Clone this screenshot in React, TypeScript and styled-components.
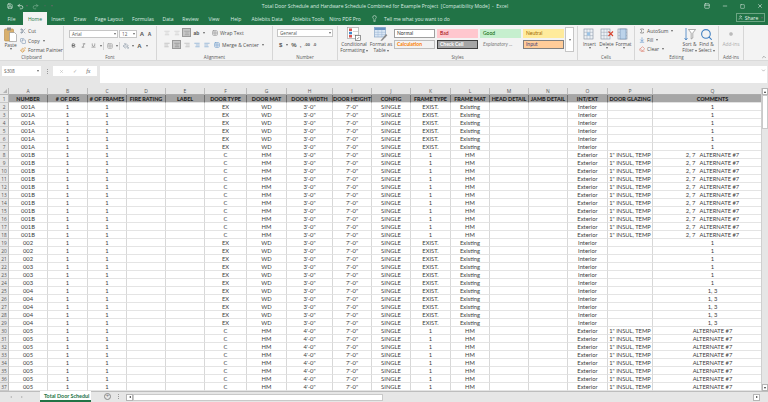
import React from "react";
import styled, { createGlobalStyle } from "styled-components";
import {
  AlignCenter, AlignLeft, AlignRight, Bold, ChevronDown, ChevronUp, Circle, Copy, Italic, Lightbulb,
  Minus, Paintbrush, PaintBucket, Redo2, Save, Scissors, Search, Sigma, Square,
  Underline, Undo2, User, X, Eraser, ArrowDownToLine, Grid2x2, PanelTop,
} from "lucide-react";

const GREEN = "#217346";

const Global = createGlobalStyle`
  html, body { margin: 0; padding: 0; background: #e6e6e6; overflow: hidden; }
  #root { width: 768px; height: 402px; }
  * { box-sizing: border-box; }
`;

const Page = styled.div`
  width: 768px;
  height: 402px;
  display: flex;
  flex-direction: column;
  overflow: hidden;
  font-family: "Open Sans", "Liberation Sans", sans-serif;
  font-size: 5px;
  color: #444;
`;

/* title bar */
const TitleBar = styled.div`
  height: 12px;
  background: ${GREEN};
  color: #e8f3ec;
  display: grid;
  grid-template-columns: 1fr auto 1fr;
  align-items: center;
  padding: 0 5px 0 7px;
`;
const Qat = styled.div`
  display: flex;
  align-items: center;
  gap: 4px;
  color: #fff;
`;
const WinControls = styled.div`
  display: flex;
  justify-content: flex-end;
  align-items: center;
  gap: 12px;
  color: #fff;
`;
const Faded = styled.span`
  display: flex;
  opacity: 0.45;
`;
const Title = styled.div`
  white-space: pre;
  font-size: 5px;
  color: #dcebe2;
`;

/* tab row */
const TabRow = styled.div`
  height: 13px;
  background: ${GREEN};
  display: flex;
  align-items: stretch;
  color: #dcebe2;
`;
const Tab = styled.div<{ $w: number; $active?: boolean }>`
  width: ${(p) => p.$w}px;
  flex: none;
  display: flex;
  align-items: center;
  justify-content: center;
  white-space: nowrap;
  font-size: 5px;
  background: ${(p) => (p.$active ? "#f3f3f3" : "transparent")};
  color: ${(p) => (p.$active ? GREEN : "inherit")};
`;
const TellMe = styled.div`
  display: flex;
  align-items: center;
  gap: 6px;
  margin-left: 11px;
  font-size: 5px;
`;
const ShareBtn = styled.div`
  margin: 1px 3px 3px auto;
  width: 29px;
  border: 1px solid #6ca583;
  display: flex;
  align-items: center;
  justify-content: center;
  gap: 2px;
  color: #e8f3ec;
  font-size: 5px;
`;

/* ribbon */
const Ribbon = styled.div`
  height: 36px;
  background: #f3f3f3;
  display: flex;
  border-bottom: 1px solid #dadada;
  flex: none;
`;
const Group = styled.div<{ $w: number }>`
  width: ${(p) => p.$w}px;
  flex: none;
  display: flex;
  flex-direction: column;
  border-right: 1px solid #d6d6d6;
  margin-top: 1px;
`;
const GroupBody = styled.div<{ $pad?: string; $gap?: number }>`
  flex: 1;
  display: flex;
  min-height: 0;
  padding: ${(p) => p.$pad ?? "0"};
  gap: ${(p) => p.$gap ?? 0}px;
`;
const GroupLabel = styled.div`
  height: 6px;
  line-height: 6px;
  text-align: center;
  font-size: 4.5px;
  color: #5a5a5a;
`;
const Stack = styled.div<{ $gap?: number; $w?: number; $pt?: number }>`
  display: flex;
  flex-direction: column;
  gap: ${(p) => p.$gap ?? 0}px;
  width: ${(p) => (p.$w ? `${p.$w}px` : "auto")};
  padding-top: ${(p) => p.$pt ?? 0}px;
`;
const Line = styled.div<{ $gap?: number; $ml?: number }>`
  display: flex;
  align-items: center;
  gap: ${(p) => p.$gap ?? 2}px;
  margin-left: ${(p) => p.$ml ?? 0}px;
  white-space: nowrap;
  color: #505050;
  height: 9px;
  font-size: 5px;
`;
const BigButton = styled.div<{ $w: number; $muted?: boolean }>`
  width: ${(p) => p.$w}px;
  flex: none;
  display: flex;
  flex-direction: column;
  align-items: center;
  padding-top: 1px;
  font-size: 4.8px;
  line-height: 6px;
  color: ${(p) => (p.$muted ? "#aaa" : "#505050")};
  white-space: nowrap;
`;
const BigIcon = styled.div`
  height: 14px;
  display: flex;
  align-items: center;
  justify-content: center;
`;
const Caret = styled.span`
  display: inline-block;
  flex: none;
  width: 0;
  height: 0;
  margin-left: 1px;
  border-left: 1.5px solid transparent;
  border-right: 1.5px solid transparent;
  border-top: 2px solid #666;
  vertical-align: middle;
`;
const Select = styled.div<{ $w: number }>`
  width: ${(p) => p.$w}px;
  height: 8px;
  background: #fff;
  border: 1px solid #c6c6c6;
  display: flex;
  align-items: center;
  justify-content: space-between;
  padding: 0 1px 0 2px;
  font-size: 4.6px;
  color: #555;
`;
const Toggle = styled.span<{ $on?: boolean }>`
  width: 9px;
  height: 9px;
  flex: none;
  display: flex;
  align-items: center;
  justify-content: center;
  background: ${(p) => (p.$on ? "#c6c6c6" : "transparent")};
  border: 1px solid ${(p) => (p.$on ? "#9a9a9a" : "transparent")};
`;
const Divider = styled.span`
  width: 1px;
  height: 8px;
  background: #d0d0d0;
  flex: none;
`;
const GlyphText = styled.span<{ $size?: number }>`
  font-size: ${(p) => p.$size ?? 6}px;
  font-weight: 600;
  color: #555;
  font-family: "Liberation Sans", sans-serif;
`;
const Gallery = styled.div`
  display: grid;
  grid-template-columns: repeat(4, 41px);
  grid-auto-rows: 9px;
  gap: 2px;
  align-content: start;
  padding-top: 3px;
  margin-left: 2px;
`;
const StyleChip = styled.div<{ $bg: string; $fg: string; $border?: string; $italic?: boolean; $bold?: boolean }>`
  background: ${(p) => p.$bg};
  color: ${(p) => p.$fg};
  border: 1px solid ${(p) => p.$border ?? p.$bg};
  font-style: ${(p) => (p.$italic ? "italic" : "normal")};
  font-weight: ${(p) => (p.$bold ? 700 : 400)};
  font-size: 5px;
  line-height: 7px;
  padding-left: 2px;
  overflow: hidden;
  white-space: nowrap;
  font-family: Lato, "Liberation Sans", sans-serif;
`;
const GalleryScroll = styled.div`
  width: 9px;
  height: 25px;
  margin: 1px 0 0 1px;
  background: #fff;
  border: 1px solid #c6c6c6;
  display: flex;
  align-items: center;
  justify-content: center;
`;
const Collapse = styled.div`
  position: absolute;
  right: 1px;
  bottom: 1px;
  display: flex;
  color: #666;
`;
const RibbonWrap = styled.div`
  position: relative;
  flex: none;
`;

/* formula bar */
const FormulaBar = styled.div`
  height: 27px;
  flex: none;
  background: #e6e6e6;
  display: flex;
  align-items: flex-start;
  padding: 5px 1px 5px 2px;
`;
const NameBox = styled.div`
  width: 39px;
  height: 10px;
  background: #fff;
  display: flex;
  align-items: center;
  justify-content: space-between;
  padding: 0 2px 0 2px;
  font-size: 4.8px;
  color: #555;
`;
const BarDots = styled.span`
  width: 1px;
  height: 5px;
  margin: 3px 5px 0 6px;
  border-left: 1px dotted #999;
  flex: none;
`;
const FxBox = styled.div`
  width: 44px;
  height: 10px;
  background: #fff;
  display: flex;
  align-items: center;
  justify-content: space-around;
  color: #aaa;
  padding: 0 2px;
`;
const FxText = styled.span`
  font-family: "Liberation Serif", serif;
  font-style: italic;
  font-size: 6px;
  color: #666;
`;
const FormulaInput = styled.div`
  flex: 1;
  height: 17px;
  margin-left: 3px;
  background: #fff;
  display: flex;
  justify-content: flex-end;
  padding: 2px 1px;
  color: #666;
`;

/* sheet */
const SheetArea = styled.div`
  height: 303px;
  flex: none;
  display: flex;
  background: #fff;
`;
// Q runs on past the window edge, under the scroll bar
const COLS = [39, 40, 39, 39, 39, 42, 40, 46, 39, 39, 40, 39, 39, 39, 40, 45, 120];
const Grid = styled.div`
  width: 761px;
  overflow: hidden;
  display: grid;
  grid-template-columns: 9px ${COLS.map((c) => `${c}px`).join(" ")};
  grid-template-rows: 7px repeat(37, 8px);
  font-family: Lato, "Liberation Sans", sans-serif;
`;
const Corner = styled.div`
  background: #e6e6e6;
  border-right: 1px solid #b8b8b8;
  border-bottom: 1px solid #b8b8b8;
  position: relative;
  &::after {
    content: "";
    position: absolute;
    right: 1px;
    bottom: 1px;
    border-left: 4px solid transparent;
    border-bottom: 4px solid #b4b4b4;
  }
`;
const ColHead = styled.div`
  background: #e6e6e6;
  border-right: 1px solid #bcbcbc;
  border-bottom: 1px solid #ababab;
  display: flex;
  align-items: center;
  justify-content: center;
  font-size: 5px;
  color: #555;
  font-family: "Open Sans", sans-serif;
`;
const RowHead = styled.div`
  background: #e6e6e6;
  border-right: 1px solid #b8b8b8;
  border-bottom: 1px solid #c8c8c8;
  display: flex;
  align-items: center;
  justify-content: center;
  font-size: 4.8px;
  color: #555;
  font-family: "Open Sans", sans-serif;
`;
const HeadCell = styled.div`
  background: #a6a6a6;
  border-right: 1px solid #6f6f6f;
  border-bottom: 1px solid #e2e2e2;
  display: flex;
  align-items: center;
  justify-content: center;
  font-size: 5.4px;
  font-weight: 900;
  color: #242424;
  white-space: nowrap;
`;
const Cell = styled.div`
  border-right: 1px solid #d8d8d8;
  border-bottom: 1px solid #e4e4e4;
  display: flex;
  align-items: center;
  justify-content: center;
  font-size: 5.8px;
  color: #3c3c3c;
  white-space: pre;
`;
const VScroll = styled.div`
  width: 7px;
  background: #e6e6e6;
  display: flex;
  flex-direction: column;
  border-left: 1px solid #cfcfcf;
`;
const ScrollBtn = styled.div`
  height: 7px;
  flex: none;
  background: #fff;
  border: 1px solid #b5b5b5;
  display: flex;
  align-items: center;
  justify-content: center;
`;
const VThumb = styled.div`
  height: 34px;
  flex: none;
  background: #fff;
  border: 1px solid #c9c9c9;
`;
const Fill = styled.div`
  flex: 1;
`;
const ArrowUp = styled.span`
  width: 0;
  height: 0;
  border-left: 1.5px solid transparent;
  border-right: 1.5px solid transparent;
  border-bottom: 2px solid #333;
`;
const ArrowDown = styled(ArrowUp)`
  border-bottom: 0;
  border-top: 2px solid #333;
`;
const ArrowLeft = styled.span<{ $c?: string }>`
  width: 0;
  height: 0;
  border-top: 1.5px solid transparent;
  border-bottom: 1.5px solid transparent;
  border-right: 2px solid ${(p) => p.$c ?? "#333"};
`;
const ArrowRight = styled.span<{ $c?: string }>`
  width: 0;
  height: 0;
  border-top: 1.5px solid transparent;
  border-bottom: 1.5px solid transparent;
  border-left: 2px solid ${(p) => p.$c ?? "#333"};
`;

/* sheet tabs */
const TabBar = styled.div`
  height: 11px;
  flex: none;
  background: #e6e6e6;
  display: flex;
  align-items: stretch;
  border-top: 1px solid #bdbdbd;
`;
const TabNav = styled.div`
  width: 40px;
  flex: none;
  display: flex;
  align-items: center;
  justify-content: flex-start;
  gap: 9px;
  padding-left: 10px;
`;
const SheetTab = styled.div`
  width: 51px;
  flex: none;
  background: #fff;
  border-bottom: 2px solid ${GREEN};
  margin-top: -1px;
  color: ${GREEN};
  font-family: Lato, sans-serif;
  font-weight: 700;
  font-size: 5.4px;
  line-height: 10px;
  padding-left: 4px;
  white-space: nowrap;
`;
const AddSheet = styled.div`
  width: 7px;
  height: 7px;
  margin: 1px 0 0 13px;
  border: 1px solid #8a8a8a;
  border-radius: 50%;
  color: #777;
  font-size: 6px;
  line-height: 5px;
  text-align: center;
`;
const Dots = styled.div`
  width: 1px;
  height: 5px;
  margin: 2px 7px 0 7px;
  border-left: 1px dotted #999;
`;
const HScroll = styled.div`
  flex: 1;
  display: flex;
  align-items: center;
  margin: 0 8px 0 0;
`;
const HBtn = styled.div`
  width: 7px;
  height: 7px;
  flex: none;
  background: #fff;
  border: 1px solid #b5b5b5;
  display: flex;
  align-items: center;
  justify-content: center;
`;
const HThumb = styled.div`
  width: 250px;
  height: 7px;
  background: #fff;
  border: 1px solid #c9c9c9;
  flex: none;
`;

/* drawn ribbon icons */
const PasteIcon = () => (
  <svg width="13" height="15" viewBox="0 0 13 15">
    <rect x="0.5" y="2" width="9" height="12" rx="1" fill="#d9b06c" stroke="#b58a45" strokeWidth="0.6" />
    <rect x="3" y="0.5" width="4" height="3" fill="#8d8d8d" />
    <path d="M5.5 5.5h5l2 2v7h-7z" fill="#fff" stroke="#8d8d8d" strokeWidth="0.6" />
  </svg>
);
const CondFormatIcon = () => (
  <svg width="14" height="14" viewBox="0 0 14 14">
    <rect x="0.5" y="0.5" width="11" height="11" fill="#fff" stroke="#9a9a9a" strokeWidth="0.6" />
    <rect x="2" y="1.5" width="3" height="2.5" fill="#d9534f" />
    <rect x="2" y="4.8" width="3" height="2.5" fill="#3f86c9" />
    <rect x="2" y="8" width="3" height="2.5" fill="#d9534f" />
    <path d="M6 4.5h5M6 8h5" stroke="#bdbdbd" strokeWidth="0.6" />
    <rect x="8.5" y="8.5" width="5" height="5" fill="#fff" stroke="#555" strokeWidth="0.6" />
    <path d="M10 12.3l2-2" stroke="#333" strokeWidth="0.6" />
  </svg>
);
const FormatTableIcon = () => (
  <svg width="14" height="14" viewBox="0 0 14 14">
    <rect x="0.5" y="0.5" width="11" height="9.5" fill="#dbe7f4" stroke="#7d9cc0" strokeWidth="0.6" />
    <rect x="0.5" y="0.5" width="11" height="2.5" fill="#6b94c4" />
    <path d="M0.5 5.3h11M0.5 7.6h11M4 3v7M7.8 3v7" stroke="#9bb5d4" strokeWidth="0.5" />
    <path d="M7 13l5-6 1.4 1.2-5 5.3L6.5 14z" fill="#8a8a8a" />
  </svg>
);
const CellsIcon = ({ mark }: { mark: "insert" | "delete" | "format" }) => (
  <svg width="14" height="13" viewBox="0 0 14 13">
    <rect x="1" y="1" width="9" height="10" fill="#eef2f6" stroke="#7f8ea0" strokeWidth="0.6" />
    <path d="M1 4.3h9M1 7.6h9M4 1v10M7 1v10" stroke="#9aa7b5" strokeWidth="0.5" />
    {mark === "insert" && <rect x="4" y="4.3" width="3" height="3.3" fill="#9cc3e6" />}
    {mark === "delete" && <path d="M8.5 3.5l4.5 4.5M13 3.5L8.5 8" stroke="#d8452f" strokeWidth="1.1" />}
    {mark === "format" && <rect x="3" y="1" width="6" height="10" fill="#bcd3ea" stroke="#5d7ea3" strokeWidth="0.5" />}
  </svg>
);
const SortIcon = () => (
  <svg width="13" height="14" viewBox="0 0 13 14">
    <path d="M3 1v12M1.5 11l1.5 2 1.5-2" fill="none" stroke="#3f7fc1" strokeWidth="0.8" />
    <path d="M5.5 2.5h7L9.8 6v5L8.2 12V6z" fill="#fff" stroke="#777" strokeWidth="0.6" />
  </svg>
);

type RowData = { n: string; t: string; m: string; w: string; ft: string; fm: string; ie: string; g: string; c: string };

const HEADERS = ["NUMBER", "# OF DRS", "# OF FRAMES", "FIRE RATING", "LABEL", "DOOR TYPE", "DOOR MAT", "DOOR WIDTH", "DOOR HEIGHT", "CONFIG", "FRAME TYPE", "FRAME MAT", "HEAD DETAIL", "JAMB DETAIL", "INT/EXT", "DOOR GLAZING", "COMMENTS"];
const LETTERS = "ABCDEFGHIJKLMNOPQ".split("");

const exist = (n: string, c: string): RowData => ({ n, t: "EX", m: "WD", w: "3'-0\"", ft: "EXIST.", fm: "Existing", ie: "Interior", g: "", c });
const ext = (n: string, w: string, c: string): RowData => ({ n, t: "C", m: "HM", w, ft: "1", fm: "HM", ie: "Exterior", g: "1\" INSUL, TEMP", c });

const rows: RowData[] = [
  ...Array.from({ length: 6 }, () => exist("001A", "1")),
  ...Array.from({ length: 11 }, () => ext("001B", "3'-0\"", "2, 7   ALTERNATE #7")),
  ...Array.from({ length: 3 }, () => exist("002", "1")),
  ...Array.from({ length: 3 }, () => exist("003", "1")),
  ...Array.from({ length: 5 }, () => exist("004", "1, 3")),
  ...Array.from({ length: 8 }, () => ext("005", "4'-0\"", "ALTERNATE #7")),
];

const rowCells = (r: RowData) => [r.n, "1", "1", "", "", r.t, r.m, r.w, "7'-0\"", "SINGLE", r.ft, r.fm, "", "", r.ie, r.g, r.c];

const TABS: [string, number, boolean?][] = [
  ["File", 23], ["Home", 24, true], ["Insert", 22], ["Draw", 22], ["Page Layout", 36], ["Formulas", 32], ["Data", 18],
  ["Review", 27], ["View", 20], ["Help", 24], ["Ablebits Data", 38], ["Ablebits Tools", 44], ["Nitro PDF Pro", 30],
];

const App: React.FC = () => {
  return (
    <Page>
      <Global />
      <TitleBar>
        <Qat>
          <Save size={6} />
          <Line $gap={1}><Undo2 size={7} color="#fff" /><Caret /></Line>
          <Faded><Redo2 size={7} /></Faded>
          <Faded><Caret /></Faded>
          <Caret />
        </Qat>
        <Title>Total Door Schedule and Hardware Schedule Combined for Example Project  [Compatibility Mode]  -  Excel</Title>
        <WinControls>
          <PanelTop size={6} />
          <Minus size={6} />
          <Square size={5} />
          <X size={6} />
        </WinControls>
      </TitleBar>
      <TabRow>
        {TABS.map(([label, w, active]) => (
          <Tab key={label} $w={w} $active={active}>{label}</Tab>
        ))}
        <TellMe>
          <Lightbulb size={7} />
          <span>Tell me what you want to do</span>
        </TellMe>
        <ShareBtn><User size={5} />Share<Caret /></ShareBtn>
      </TabRow>
      <RibbonWrap>
        <Ribbon>
          <Group $w={64}>
            <GroupBody $gap={3} $pad="0 0 0 4px">
              <BigButton $w={13}>
                <PasteIcon />
                <span>Paste</span>
                <Caret />
              </BigButton>
              <Stack $pt={1} $gap={0.5}>
                <Line><Scissors size={6} color="#6b7a8c" />Cut</Line>
                <Line><Copy size={6} color="#6e8bab" />Copy<Caret /></Line>
                <Line><Paintbrush size={6} color="#d9902f" />Format Painter</Line>
              </Stack>
            </GroupBody>
            <GroupLabel>Clipboard</GroupLabel>
          </Group>
          <Group $w={93}>
            <GroupBody $pad="3px 0 0 5px">
              <Stack $gap={3}>
                <Line $gap={1}>
                  <Select $w={49}>Arial<Caret /></Select>
                  <Select $w={18}>12<Caret /></Select>
                  <GlyphText $size={6}>&nbsp;A</GlyphText>
                  <GlyphText $size={5}>&nbsp;&nbsp;A</GlyphText>
                </Line>
                <Line $gap={1}>
                  <Toggle><Bold size={5} color="#444" strokeWidth={3} /></Toggle>
                  <Toggle><Italic size={5} color="#444" /></Toggle>
                  <Toggle><Underline size={5} color="#444" /></Toggle>
                  <Caret />
                  <Divider />
                  <Toggle><Grid2x2 size={6} color="#888" /></Toggle>
                  <Caret />
                  <Divider />
                  <Toggle><PaintBucket size={6} color="#7a8a9a" /></Toggle>
                  <Caret />
                  <Toggle><GlyphText>A</GlyphText></Toggle>
                  <Caret />
                </Line>
              </Stack>
            </GroupBody>
            <GroupLabel>Font</GroupLabel>
          </Group>
          <Group $w={116}>
            <GroupBody $pad="2px 0 0 5px">
              <Stack $gap={3}>
                <Line $gap={1}>
                  <Toggle><AlignCenter size={6} color="#bbb" /></Toggle>
                  <Toggle><AlignCenter size={6} color="#bbb" /></Toggle>
                  <Toggle $on><AlignCenter size={6} color="#888" /></Toggle>
                  <Toggle><GlyphText $size={5}>ab</GlyphText></Toggle>
                  <Caret />
                  <Line $ml={6} $gap={2}><Grid2x2 size={6} color="#777" />Wrap Text</Line>
                </Line>
                <Line $gap={1}>
                  <Toggle><AlignLeft size={6} color="#999" /></Toggle>
                  <Toggle $on><AlignCenter size={6} color="#777" /></Toggle>
                  <Toggle><AlignRight size={6} color="#999" /></Toggle>
                  <Toggle><AlignRight size={6} color="#4d86c0" /></Toggle>
                  <Toggle><AlignLeft size={6} color="#4d86c0" /></Toggle>
                  <Line $gap={2} $ml={2}><Grid2x2 size={6} color="#4d86c0" />Merge &amp; Center<Caret /></Line>
                </Line>
              </Stack>
            </GroupBody>
            <GroupLabel>Alignment</GroupLabel>
          </Group>
          <Group $w={65}>
            <GroupBody $pad="3px 0 0 4px">
              <Stack $gap={3}>
                <Select $w={56}>General<Caret /></Select>
                <Line $gap={3} $ml={2}>
                  <GlyphText>$</GlyphText><Caret />
                  <GlyphText>%</GlyphText>
                  <GlyphText>,</GlyphText>
                  <GlyphText $size={4}>.00</GlyphText>
                  <GlyphText $size={4}>.0</GlyphText>
                </Line>
              </Stack>
            </GroupBody>
            <GroupLabel>Number</GroupLabel>
          </Group>
          <Group $w={240}>
            <GroupBody>
              <BigButton $w={32}>
                <BigIcon><CondFormatIcon /></BigIcon>
                <span>Conditional</span>
                <span>Formatting<Caret /></span>
              </BigButton>
              <BigButton $w={22}>
                <BigIcon><FormatTableIcon /></BigIcon>
                <span>Format as</span>
                <span>Table<Caret /></span>
              </BigButton>
              <Gallery>
                <StyleChip $bg="#fff" $fg="#333" $border="#9f9f9f">Normal</StyleChip>
                <StyleChip $bg="#ffc7ce" $fg="#9c0006">Bad</StyleChip>
                <StyleChip $bg="#c6efce" $fg="#006100">Good</StyleChip>
                <StyleChip $bg="#ffeb9c" $fg="#9c6500">Neutral</StyleChip>
                <StyleChip $bg="#f2f2f2" $fg="#fa7d00" $border="#bdbdbd" $bold>Calculation</StyleChip>
                <StyleChip $bg="#a5a5a5" $fg="#fff" $border="#3f3f3f" $bold>Check Cell</StyleChip>
                <StyleChip $bg="#f3f3f3" $fg="#7f7f7f" $italic>Explanatory ...</StyleChip>
                <StyleChip $bg="#ffcc99" $fg="#3f3f76" $border="#7f7f7f">Input</StyleChip>
              </Gallery>
              <GalleryScroll><Caret /></GalleryScroll>
            </GroupBody>
            <GroupLabel>Styles</GroupLabel>
          </Group>
          <Group $w={57}>
            <GroupBody $pad="0 0 0 3px">
              <BigButton $w={17}>
                <BigIcon><CellsIcon mark="insert" /></BigIcon>
                <span>Insert</span>
                <Caret />
              </BigButton>
              <BigButton $w={17}>
                <BigIcon><CellsIcon mark="delete" /></BigIcon>
                <span>Delete</span>
                <Caret />
              </BigButton>
              <BigButton $w={17}>
                <BigIcon><CellsIcon mark="format" /></BigIcon>
                <span>Format</span>
                <Caret />
              </BigButton>
            </GroupBody>
            <GroupLabel>Cells</GroupLabel>
          </Group>
          <Group $w={84}>
            <GroupBody $pad="0 0 0 4px">
              <Stack $w={42}>
                <Line><Sigma size={6} color="#444" />AutoSum<Caret /></Line>
                <Line><ArrowDownToLine size={6} color="#3f7fc1" />Fill<Caret /></Line>
                <Line><Eraser size={6} color="#d9634f" />Clear<Caret /></Line>
              </Stack>
              <BigButton $w={17}>
                <BigIcon><SortIcon /></BigIcon>
                <span>Sort &amp;</span>
                <span>Filter<Caret /></span>
              </BigButton>
              <BigButton $w={17}>
                <BigIcon><Search size={13} color="#3f7fc1" /></BigIcon>
                <span>Find &amp;</span>
                <span>Select<Caret /></span>
              </BigButton>
            </GroupBody>
            <GroupLabel>Editing</GroupLabel>
          </Group>
          <Group $w={25}>
            <GroupBody>
              <BigButton $w={24} $muted>
                <BigIcon><Circle size={4} color="#bbb" fill="#bbb" /></BigIcon>
                <span>Add-ins</span>
              </BigButton>
            </GroupBody>
            <GroupLabel>Add-ins</GroupLabel>
          </Group>
        </Ribbon>
        <Collapse><ChevronUp size={6} /></Collapse>
      </RibbonWrap>
      <FormulaBar>
        <NameBox>S308<Caret /></NameBox>
        <BarDots />
        <FxBox>
          <X size={5} />
          <span>✓</span>
          <FxText>fx</FxText>
        </FxBox>
        <FormulaInput><ChevronDown size={5} /></FormulaInput>
      </FormulaBar>
      <SheetArea>
        <Grid>
          <Corner />
          {LETTERS.map((l) => <ColHead key={l}>{l}</ColHead>)}
          <RowHead>1</RowHead>
          {HEADERS.map((h) => <HeadCell key={h}>{h}</HeadCell>)}
          {rows.map((r, i) => (
            <React.Fragment key={i}>
              <RowHead>{i + 2}</RowHead>
              {rowCells(r).map((v, j) => <Cell key={j}>{v}</Cell>)}
            </React.Fragment>
          ))}
        </Grid>
        <VScroll>
          <ScrollBtn><ArrowUp /></ScrollBtn>
          <VThumb />
          <Fill />
          <ScrollBtn><ArrowDown /></ScrollBtn>
        </VScroll>
      </SheetArea>
      <TabBar>
        <TabNav>
          <ArrowLeft $c="#b5b5b5" />
          <ArrowRight $c="#b5b5b5" />
        </TabNav>
        <SheetTab>Total Door Schedul</SheetTab>
        <AddSheet>+</AddSheet>
        <Dots />
        <HScroll>
          <HBtn><ArrowLeft /></HBtn>
          <HThumb />
          <Fill />
          <HBtn><ArrowRight /></HBtn>
        </HScroll>
      </TabBar>
    </Page>
  );
};

export default App;
